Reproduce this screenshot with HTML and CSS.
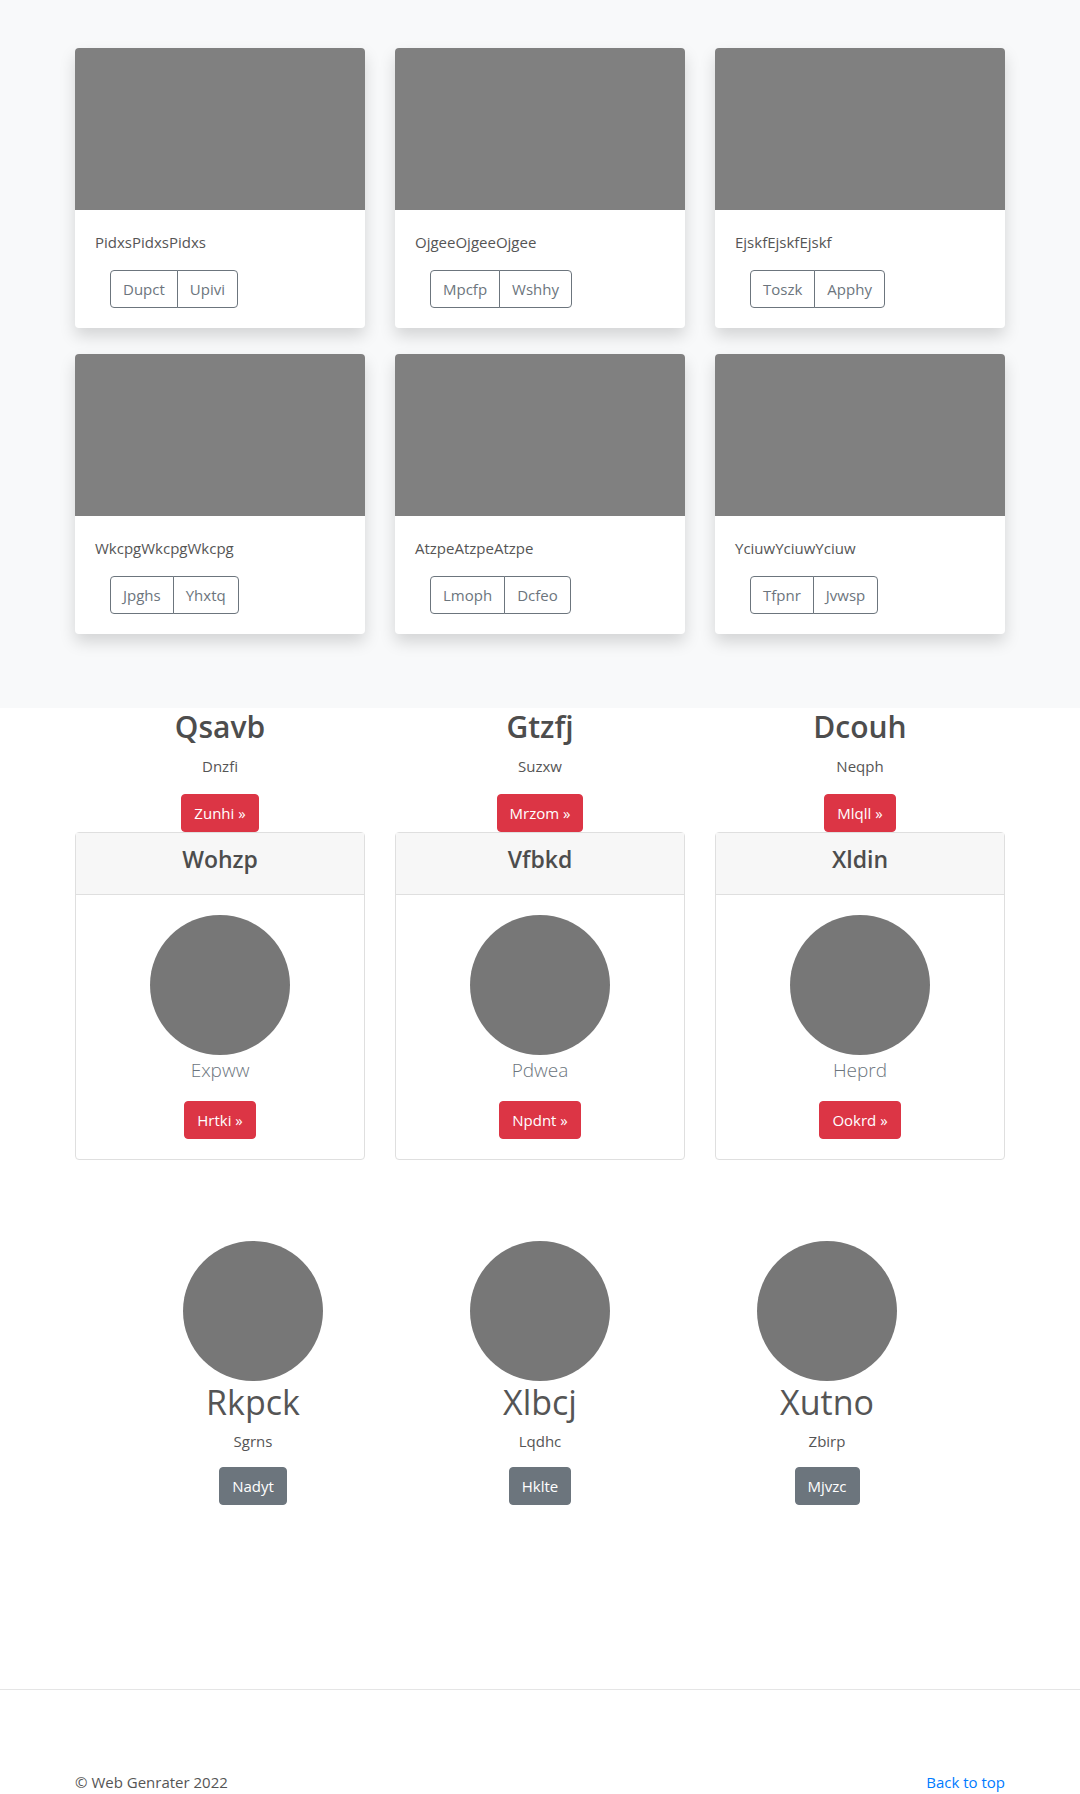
FILE: index.html
```html
<!DOCTYPE html>
<html lang="en">
<head>
<meta charset="utf-8">
<title>Web Genrater</title>
<link rel="stylesheet" href="styles.css">
</head>
<body>
<main>
  <section class="album">
    <div class="container album-grid">
      <div class="card shadow">
        <div class="card-img"></div>
        <div class="card-body">
          <p class="card-text">PidxsPidxsPidxs</p>
          <div class="btn-group"><button class="btn btn-outline">Dupct</button><button class="btn btn-outline">Upivi</button></div>
        </div>
      </div>
      <div class="card shadow">
        <div class="card-img"></div>
        <div class="card-body">
          <p class="card-text">OjgeeOjgeeOjgee</p>
          <div class="btn-group"><button class="btn btn-outline">Mpcfp</button><button class="btn btn-outline">Wshhy</button></div>
        </div>
      </div>
      <div class="card shadow">
        <div class="card-img"></div>
        <div class="card-body">
          <p class="card-text">EjskfEjskfEjskf</p>
          <div class="btn-group"><button class="btn btn-outline">Toszk</button><button class="btn btn-outline">Apphy</button></div>
        </div>
      </div>
      <div class="card shadow">
        <div class="card-img"></div>
        <div class="card-body">
          <p class="card-text">WkcpgWkcpgWkcpg</p>
          <div class="btn-group"><button class="btn btn-outline">Jpghs</button><button class="btn btn-outline">Yhxtq</button></div>
        </div>
      </div>
      <div class="card shadow">
        <div class="card-img"></div>
        <div class="card-body">
          <p class="card-text">AtzpeAtzpeAtzpe</p>
          <div class="btn-group"><button class="btn btn-outline">Lmoph</button><button class="btn btn-outline">Dcfeo</button></div>
        </div>
      </div>
      <div class="card shadow">
        <div class="card-img"></div>
        <div class="card-body">
          <p class="card-text">YciuwYciuwYciuw</p>
          <div class="btn-group"><button class="btn btn-outline">Tfpnr</button><button class="btn btn-outline">Jvwsp</button></div>
        </div>
      </div>
    </div>
  </section>

  <section class="features">
    <div class="container grid3">
      <div class="feature">
        <h2 class="feature-title">Qsavb</h2>
        <p class="feature-text">Dnzfi</p>
        <p class="feature-action"><a class="btn btn-danger" href="#">Zunhi &raquo;</a></p>
      </div>
      <div class="feature">
        <h2 class="feature-title">Gtzfj</h2>
        <p class="feature-text">Suzxw</p>
        <p class="feature-action"><a class="btn btn-danger" href="#">Mrzom &raquo;</a></p>
      </div>
      <div class="feature">
        <h2 class="feature-title">Dcouh</h2>
        <p class="feature-text">Neqph</p>
        <p class="feature-action"><a class="btn btn-danger" href="#">Mlqll &raquo;</a></p>
      </div>
    </div>
    <div class="container grid3">
      <div class="pcard">
        <div class="pcard-header"><h4 class="pcard-title">Wohzp</h4></div>
        <div class="pcard-body">
          <div class="circle"></div>
          <p class="lead">Expww</p>
          <a class="btn btn-danger" href="#">Hrtki &raquo;</a>
        </div>
      </div>
      <div class="pcard">
        <div class="pcard-header"><h4 class="pcard-title">Vfbkd</h4></div>
        <div class="pcard-body">
          <div class="circle"></div>
          <p class="lead">Pdwea</p>
          <a class="btn btn-danger" href="#">Npdnt &raquo;</a>
        </div>
      </div>
      <div class="pcard">
        <div class="pcard-header"><h4 class="pcard-title">Xldin</h4></div>
        <div class="pcard-body">
          <div class="circle"></div>
          <p class="lead">Heprd</p>
          <a class="btn btn-danger" href="#">Ookrd &raquo;</a>
        </div>
      </div>
    </div>
  </section>

  <section class="marketing">
    <div class="marketing-grid">
      <div class="mk">
        <div class="circle"></div>
        <h2 class="mk-title">Rkpck</h2>
        <p class="mk-text">Sgrns</p>
        <a class="btn btn-secondary" href="#">Nadyt</a>
      </div>
      <div class="mk">
        <div class="circle"></div>
        <h2 class="mk-title">Xlbcj</h2>
        <p class="mk-text">Lqdhc</p>
        <a class="btn btn-secondary" href="#">Hklte</a>
      </div>
      <div class="mk">
        <div class="circle"></div>
        <h2 class="mk-title">Xutno</h2>
        <p class="mk-text">Zbirp</p>
        <a class="btn btn-secondary" href="#">Mjvzc</a>
      </div>
    </div>
  </section>
</main>

<footer class="footer">
  <div class="container footer-inner">
    <p class="copy">&copy; Web Genrater 2022</p>
    <a class="top-link" href="#">Back to top</a>
  </div>
</footer>
</body>
</html>
```

FILE: styles.css
```css
* { box-sizing: border-box; }

html, body {
  margin: 0;
  padding: 0;
}

body {
  font-family: "Open Sans", "Noto Sans", "Liberation Sans", sans-serif;
  font-size: 15px;
  line-height: 1.5;
  color: #555;
  background: #fff;
}

p { margin: 0; }

.container {
  width: 930px;
  margin: 0 auto;
}

/* Album */
.album {
  background: #f8f9fa;
  padding: 48px 0;
}

.album-grid {
  display: grid;
  grid-template-columns: repeat(3, 290px);
  column-gap: 30px;
  row-gap: 26px;
  margin-bottom: 26px;
}

.card {
  background: #fff;
  border-radius: 4px;
  overflow: hidden;
}

.shadow {
  box-shadow: 0 8px 16px rgba(0, 0, 0, 0.15);
}

.card-img {
  height: 162px;
  background: #808080;
}

.card-body {
  padding: 20px;
}

.card-text {
  margin-bottom: 16px;
  line-height: 24px;
}

.btn-group {
  display: inline-flex;
  margin-left: 15px;
}

.btn {
  display: inline-block;
  font-family: inherit;
  font-size: 15px;
  line-height: 24px;
  padding: 6px 12px;
  border: 1px solid transparent;
  border-radius: 4px;
  text-decoration: none;
  cursor: pointer;
}

.btn-outline {
  background: #fff;
  color: #6c757d;
  border-color: #6c757d;
  height: 38px;
  line-height: 24px;
}

.btn-group .btn-outline:first-child {
  border-top-right-radius: 0;
  border-bottom-right-radius: 0;
}

.btn-group .btn-outline + .btn-outline {
  margin-left: -1px;
  border-top-left-radius: 0;
  border-bottom-left-radius: 0;
}

.btn-danger {
  background: #dc3545;
  border-color: #dc3545;
  color: #fff;
}

.btn-secondary {
  background: #6c757d;
  border-color: #6c757d;
  color: #fff;
}

/* Features */
.grid3 {
  display: grid;
  grid-template-columns: repeat(3, 290px);
  column-gap: 30px;
}

.feature {
  text-align: center;
}

.feature-title {
  margin: 0 0 8px;
  font-size: 30px;
  font-weight: 600;
  line-height: 38px;
  color: #4d4d4d;
}

.feature-text {
  margin-bottom: 16px;
  line-height: 24px;
}

.pcard {
  border: 1px solid #dfdfdf;
  border-radius: 4px;
  background: #fff;
  text-align: center;
}

.pcard-header {
  background: #f7f7f7;
  border-bottom: 1px solid #dfdfdf;
  padding: 12px 20px;
}

.pcard-title {
  margin: 0 0 8px;
  font-size: 23px;
  font-weight: 600;
  line-height: 29px;
  color: #4d4d4d;
}

.pcard-body {
  padding: 20px;
  display: flex;
  flex-direction: column;
  align-items: center;
}

.circle {
  width: 140px;
  height: 140px;
  border-radius: 50%;
  background: #777;
}

.lead {
  font-size: 19px;
  font-weight: 300;
  line-height: 30px;
  margin-bottom: 16px;
  color: #6c757d;
}

/* Marketing */
.marketing {
  padding: 81px 0 184px;
}

.marketing-grid {
  width: 861px;
  margin: 0 auto;
  display: grid;
  grid-template-columns: repeat(3, 1fr);
}

.mk {
  display: flex;
  flex-direction: column;
  align-items: center;
  text-align: center;
}

.mk-title {
  margin: 0 0 6px;
  font-size: 34px;
  font-weight: 400;
  line-height: 42px;
  color: #555;
}

.mk-text {
  margin-bottom: 14px;
  line-height: 24px;
}

/* Footer */
.footer {
  border-top: 1px solid #e5e5e5;
  padding-top: 80px;
}

.footer-inner {
  display: flex;
  justify-content: space-between;
  align-items: baseline;
}

.copy {
  line-height: 24px;
}

.top-link {
  color: #007bff;
  text-decoration: none;
  line-height: 24px;
}
```
